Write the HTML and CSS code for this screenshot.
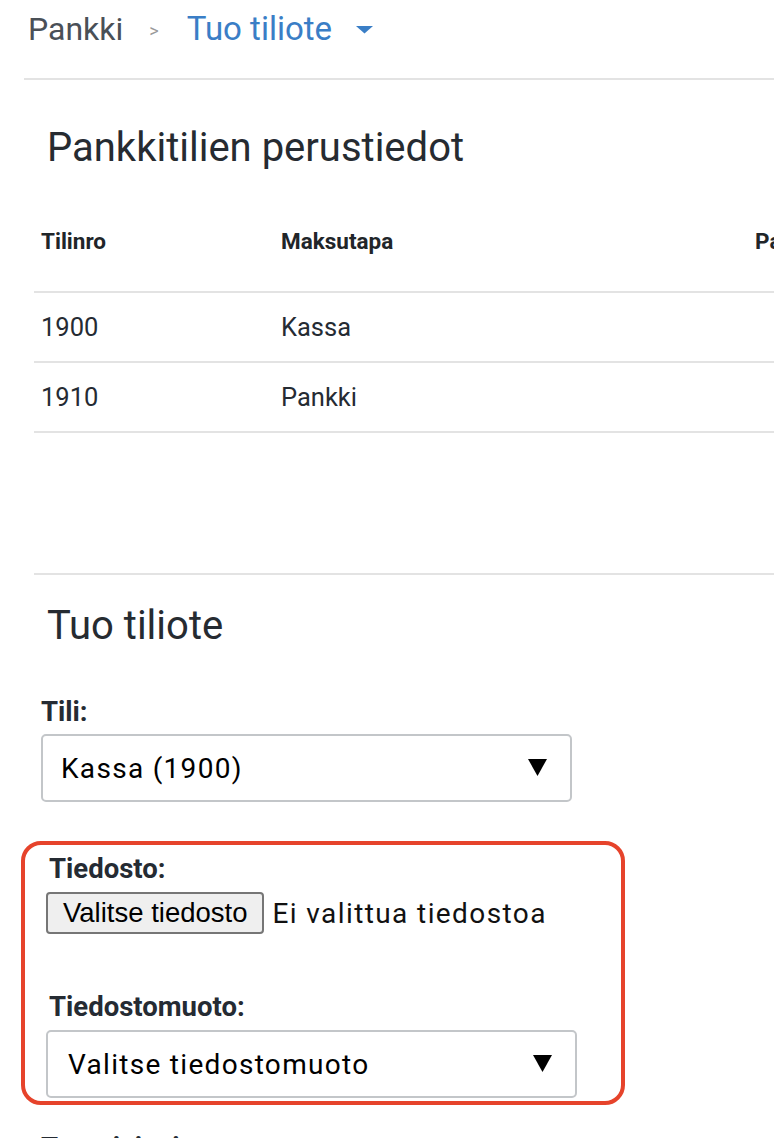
FILE: index.html
```html
<!DOCTYPE html>
<html lang="fi">
<head>
<meta charset="utf-8">
<title>Tuo tiliote</title>
<link rel="stylesheet" href="styles.css">
</head>
<body>
<div class="page">
  <nav class="crumbs">
    <span class="crumb">Pankki</span>
    <span class="sep">&gt;</span>
    <span class="crumb current">Tuo tiliote</span>
    <svg class="caret" width="17" height="8" viewBox="0 0 17 8"><path d="M0 0H17L8.5 7.5Z" fill="#3a7ec6"/></svg>
  </nav>
  <main class="content">
    <section class="accounts">
      <h2 class="title">Pankkitilien perustiedot</h2>
      <table class="grid">
        <thead>
          <tr>
            <th class="c1">Tilinro</th>
            <th class="c2">Maksutapa</th>
            <th class="c3">Pankkitili</th>
          </tr>
        </thead>
        <tbody>
          <tr><td>1900</td><td>Kassa</td><td></td></tr>
          <tr><td>1910</td><td>Pankki</td><td></td></tr>
        </tbody>
      </table>
    </section>
    <section class="import">
      <h2 class="title">Tuo tiliote</h2>
      <div class="form">
        <div class="label first">Tili:</div>
        <div class="select first-select">
          <span class="select-text">Kassa (1900)</span>
          <svg class="arrow" width="19" height="17" viewBox="0 0 19 17"><path d="M0 0H19L9.5 17Z" fill="#000"/></svg>
        </div>
        <div class="highlight">
          <div class="label inner">Tiedosto:</div>
          <div class="file-row">
            <button class="file-btn" type="button">Valitse tiedosto</button>
            <span class="file-name">Ei valittua tiedostoa</span>
          </div>
          <div class="label inner second">Tiedostomuoto:</div>
          <div class="select second-select">
            <span class="select-text">Valitse tiedostomuoto</span>
            <svg class="arrow" width="19" height="17" viewBox="0 0 19 17"><path d="M0 0H19L9.5 17Z" fill="#000"/></svg>
          </div>
        </div>
        <div class="label after">Tuontiaineisto:</div>
      </div>
    </section>
  </main>
</div>
</body>
</html>
```

FILE: styles.css
```css
html, body {
  margin: 0;
  padding: 0;
  background: #ffffff;
}

body {
  font-family: Roboto, "Noto Sans", "Liberation Sans", sans-serif;
  color: #252b33;
}

.page {
  width: 774px;
  height: 1138px;
  overflow: hidden;
}

/* Breadcrumb */
.crumbs {
  margin-left: 24px;
  padding: 9px 0 29px 4px;
  border-bottom: 2px solid #e3e3e3;
  display: flex;
  align-items: center;
  height: 40px;
}

.crumb {
  font-size: 32px;
  line-height: 40px;
  color: #4a5057;
  white-space: nowrap;
}

.crumb.current {
  font-size: 33px;
  color: #3a7ec6;
}

.sep {
  font-size: 18px;
  line-height: 40px;
  color: #9a9a9a;
  margin: 0 28px 0 26px;
  padding-top: 3px;
}

.caret {
  margin-left: 24px;
  margin-top: 2px;
  display: block;
}

/* Content */
.content {
  margin-left: 34px;
}

.title {
  margin: 0;
  padding-left: 13px;
  font-size: 40px;
  line-height: 48px;
  font-weight: 400;
  color: #262b31;
}

.accounts .title {
  margin-top: 44px;
}

.grid {
  border-collapse: separate;
  border-spacing: 0;
  table-layout: fixed;
  width: 1000px;
}

.grid th,
.grid td {
  text-align: left;
  padding-left: 7px;
  padding-right: 7px;
  border-bottom: 2px solid #e3e3e3;
  white-space: nowrap;
  overflow: hidden;
}

.grid th {
  font-size: 22.5px;
  line-height: 28px;
  font-weight: 700;
  color: #212529;
  padding-top: 55px;
  padding-bottom: 36px;
}

.grid td {
  font-size: 25.5px;
  line-height: 30px;
  color: #252b33;
  padding-top: 19px;
  padding-bottom: 19px;
}

.grid .c1 { width: 226px; }
.grid .c2 { width: 460px; }

/* Import section */
.import {
  margin-top: 140px;
  border-top: 2px solid #e3e3e3;
}

.import .title {
  margin-top: 27px;
}

.form {
  padding-left: 7px;
}

.label {
  font-size: 27.5px;
  line-height: 32px;
  font-weight: 700;
  color: #252b33;
}

.label.first {
  margin-top: 46px;
}

.select {
  position: relative;
  box-sizing: border-box;
  width: 531px;
  height: 68px;
  border: 2px solid #c3c6c9;
  border-radius: 5px;
  background: #fff;
  display: flex;
  align-items: center;
  padding-left: 18px;
}

.first-select {
  margin-top: 6px;
}

.select-text {
  font-size: 28px;
  letter-spacing: 1.3px;
  color: #000;
  white-space: nowrap;
}

.arrow {
  position: absolute;
  right: 23px;
  top: 23px;
}

.highlight {
  box-sizing: border-box;
  width: 604px;
  margin-top: 39px;
  margin-left: -20px;
  border: 4px solid #e6432b;
  border-radius: 20px;
  padding: 8px 0 3px 21px;
}

.label.inner {
  padding-left: 3px;
}

.file-row {
  margin-top: 7px;
  display: flex;
  align-items: center;
  height: 42px;
}

.file-btn {
  box-sizing: border-box;
  height: 42px;
  margin: 0;
  padding: 0 15px;
  font-family: "Liberation Sans", Arial, sans-serif;
  font-size: 27.5px;
  line-height: 38px;
  color: #000;
  background: #efefef;
  border: 2px solid #767676;
  border-radius: 4px;
}

.file-name {
  margin-left: 8px;
  font-size: 28px;
  letter-spacing: 1.4px;
  color: #111;
  white-space: nowrap;
}

.label.second {
  margin-top: 57px;
}

.second-select {
  margin-top: 7px;
  padding-left: 20px;
}

.label.after {
  margin-top: 27px;
}
```
